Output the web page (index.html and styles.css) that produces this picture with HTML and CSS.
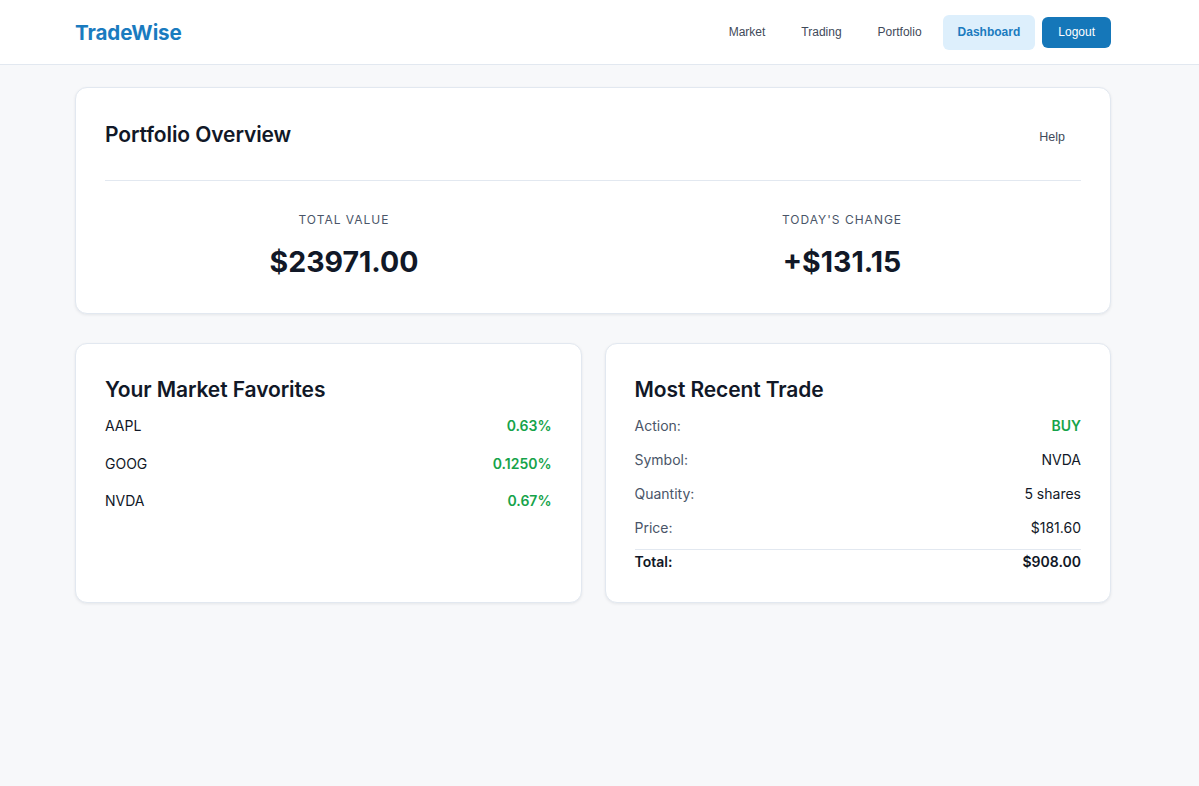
FILE: index.html
```html
<!DOCTYPE html>
<html lang="en">
<head>
<meta charset="utf-8">
<title>TradeWise</title>
<link rel="stylesheet" href="styles.css">
</head>
<body>
<header class="topbar">
  <div class="topbar-inner">
    <div class="logo">TradeWise</div>
    <nav class="nav">
      <button class="nav-link">Market</button>
      <button class="nav-link">Trading</button>
      <button class="nav-link">Portfolio</button>
      <button class="nav-link active">Dashboard</button>
      <button class="logout">Logout</button>
    </nav>
  </div>
</header>
<main class="page">
  <section class="card overview">
    <div class="overview-head">
      <h2 class="card-title">Portfolio Overview</h2>
      <button class="help">Help</button>
    </div>
    <div class="stats">
      <div class="stat">
        <div class="stat-label">Total Value</div>
        <div class="stat-value">$23971.00</div>
      </div>
      <div class="stat">
        <div class="stat-label">Today's Change</div>
        <div class="stat-value">+$131.15</div>
      </div>
    </div>
  </section>
  <div class="two-col">
    <section class="card">
      <h2 class="card-title">Your Market Favorites</h2>
      <ul class="fav-list">
        <li class="fav-row"><span>AAPL</span><span class="up">0.63%</span></li>
        <li class="fav-row"><span>GOOG</span><span class="up">0.1250%</span></li>
        <li class="fav-row"><span>NVDA</span><span class="up">0.67%</span></li>
      </ul>
    </section>
    <section class="card">
      <h2 class="card-title">Most Recent Trade</h2>
      <div class="trade">
        <div class="trade-row"><span class="k">Action:</span><span class="v buy">BUY</span></div>
        <div class="trade-row"><span class="k">Symbol:</span><span class="v">NVDA</span></div>
        <div class="trade-row"><span class="k">Quantity:</span><span class="v">5 shares</span></div>
        <div class="trade-row"><span class="k">Price:</span><span class="v">$181.60</span></div>
        <div class="trade-row total"><span class="k">Total:</span><span class="v">$908.00</span></div>
      </div>
    </section>
  </div>
</main>
</body>
</html>
```
FILE: styles.css
```css
* { box-sizing: border-box; }
html, body { margin: 0; padding: 0; }
body {
  background: #f7f8fa;
  font-family: Inter, "Noto Sans", sans-serif;
  color: #111827;
  min-height: 786px;
}
.topbar {
  background: #ffffff;
  border-bottom: 1px solid #e2e8f0;
  height: 65px;
}
.topbar-inner {
  width: 1036px;
  margin-left: 75px;
  height: 64px;
  display: flex;
  align-items: center;
  justify-content: space-between;
}
.logo {
  font-size: 20.6px;
  font-weight: 700;
  color: #1a7bbf;
  letter-spacing: -0.1px;
}
.nav {
  display: flex;
  align-items: center;
  gap: 6px;
}
.nav-link, .logout, .help {
  font-family: "Liberation Sans", Arial, sans-serif;
  font-size: 12px;
  border: none;
  background: transparent;
  color: #3f4a5a;
  cursor: pointer;
  border-radius: 6px;
  padding: 10px 15px;
  line-height: 15px;
}
.nav-link.active {
  background: #ddeffc;
  color: #1a7bbf;
  font-weight: 700;
}
.logout {
  margin-left: 1px;
  background: #1577b9;
  color: #ffffff;
  padding: 8px 16px;
}
.page {
  width: 1036px;
  margin-left: 75px;
  padding-top: 22px;
}
.card {
  background: #ffffff;
  border: 1px solid #e2e8f0;
  border-radius: 12px;
  box-shadow: 0 1px 3px rgba(15, 23, 42, 0.08);
  padding: 29px;
}
.overview { padding-bottom: 33px; }
.overview-head {
  display: flex;
  justify-content: space-between;
  align-items: flex-start;
  padding-bottom: 27px;
  border-bottom: 1px solid #e2e8f0;
}
.card-title {
  margin: 0;
  font-size: 21px;
  font-weight: 600;
  line-height: 35px;
  color: #111827;
  letter-spacing: -0.1px;
}
.help { margin-top: 5px; padding: 8px 16px; font-size: 12.5px; }
.stats {
  display: grid;
  grid-template-columns: 1fr 1fr;
  gap: 20px;
  padding-top: 31px;
}
.stat { text-align: center; }
.stat-label {
  font-size: 12px;
  text-transform: uppercase;
  letter-spacing: 1px;
  color: #4a5568;
  line-height: 16px;
}
.stat-value {
  font-size: 28.5px;
  font-weight: 700;
  margin-top: 16px;
  line-height: 36px;
  color: #111827;
}
.two-col {
  display: grid;
  grid-template-columns: 1fr 1fr;
  gap: 23px;
  margin-top: 29px;
}
.two-col .card { min-height: 260px; }
.two-col .card-title { line-height: 34px; }
.fav-list {
  list-style: none;
  margin: 6px 0 0 0;
  padding: 0;
}
.fav-row {
  display: flex;
  justify-content: space-between;
  font-size: 14px;
  line-height: 17.5px;
  padding: 10px 0;
  color: #111827;
}
.fav-row:first-child { padding-top: 4px; }
.up { color: #16a34a; font-weight: 600; }
.trade { margin-top: 6px; }
.trade-row {
  display: flex;
  justify-content: space-between;
  font-size: 14px;
  line-height: 18px;
  padding: 8px 0;
}
.trade-row:first-child { padding-top: 4px; }
.k { color: #4a5568; }
.v { color: #111827; }
.buy { color: #16a34a; font-weight: 600; }
.trade-row.total {
  border-top: 1px solid #e2e8f0;
  margin-top: 4px;
  padding: 3px 0 2px;
}
.trade-row.total .k, .trade-row.total .v { color: #111827; font-weight: 600; }
```
